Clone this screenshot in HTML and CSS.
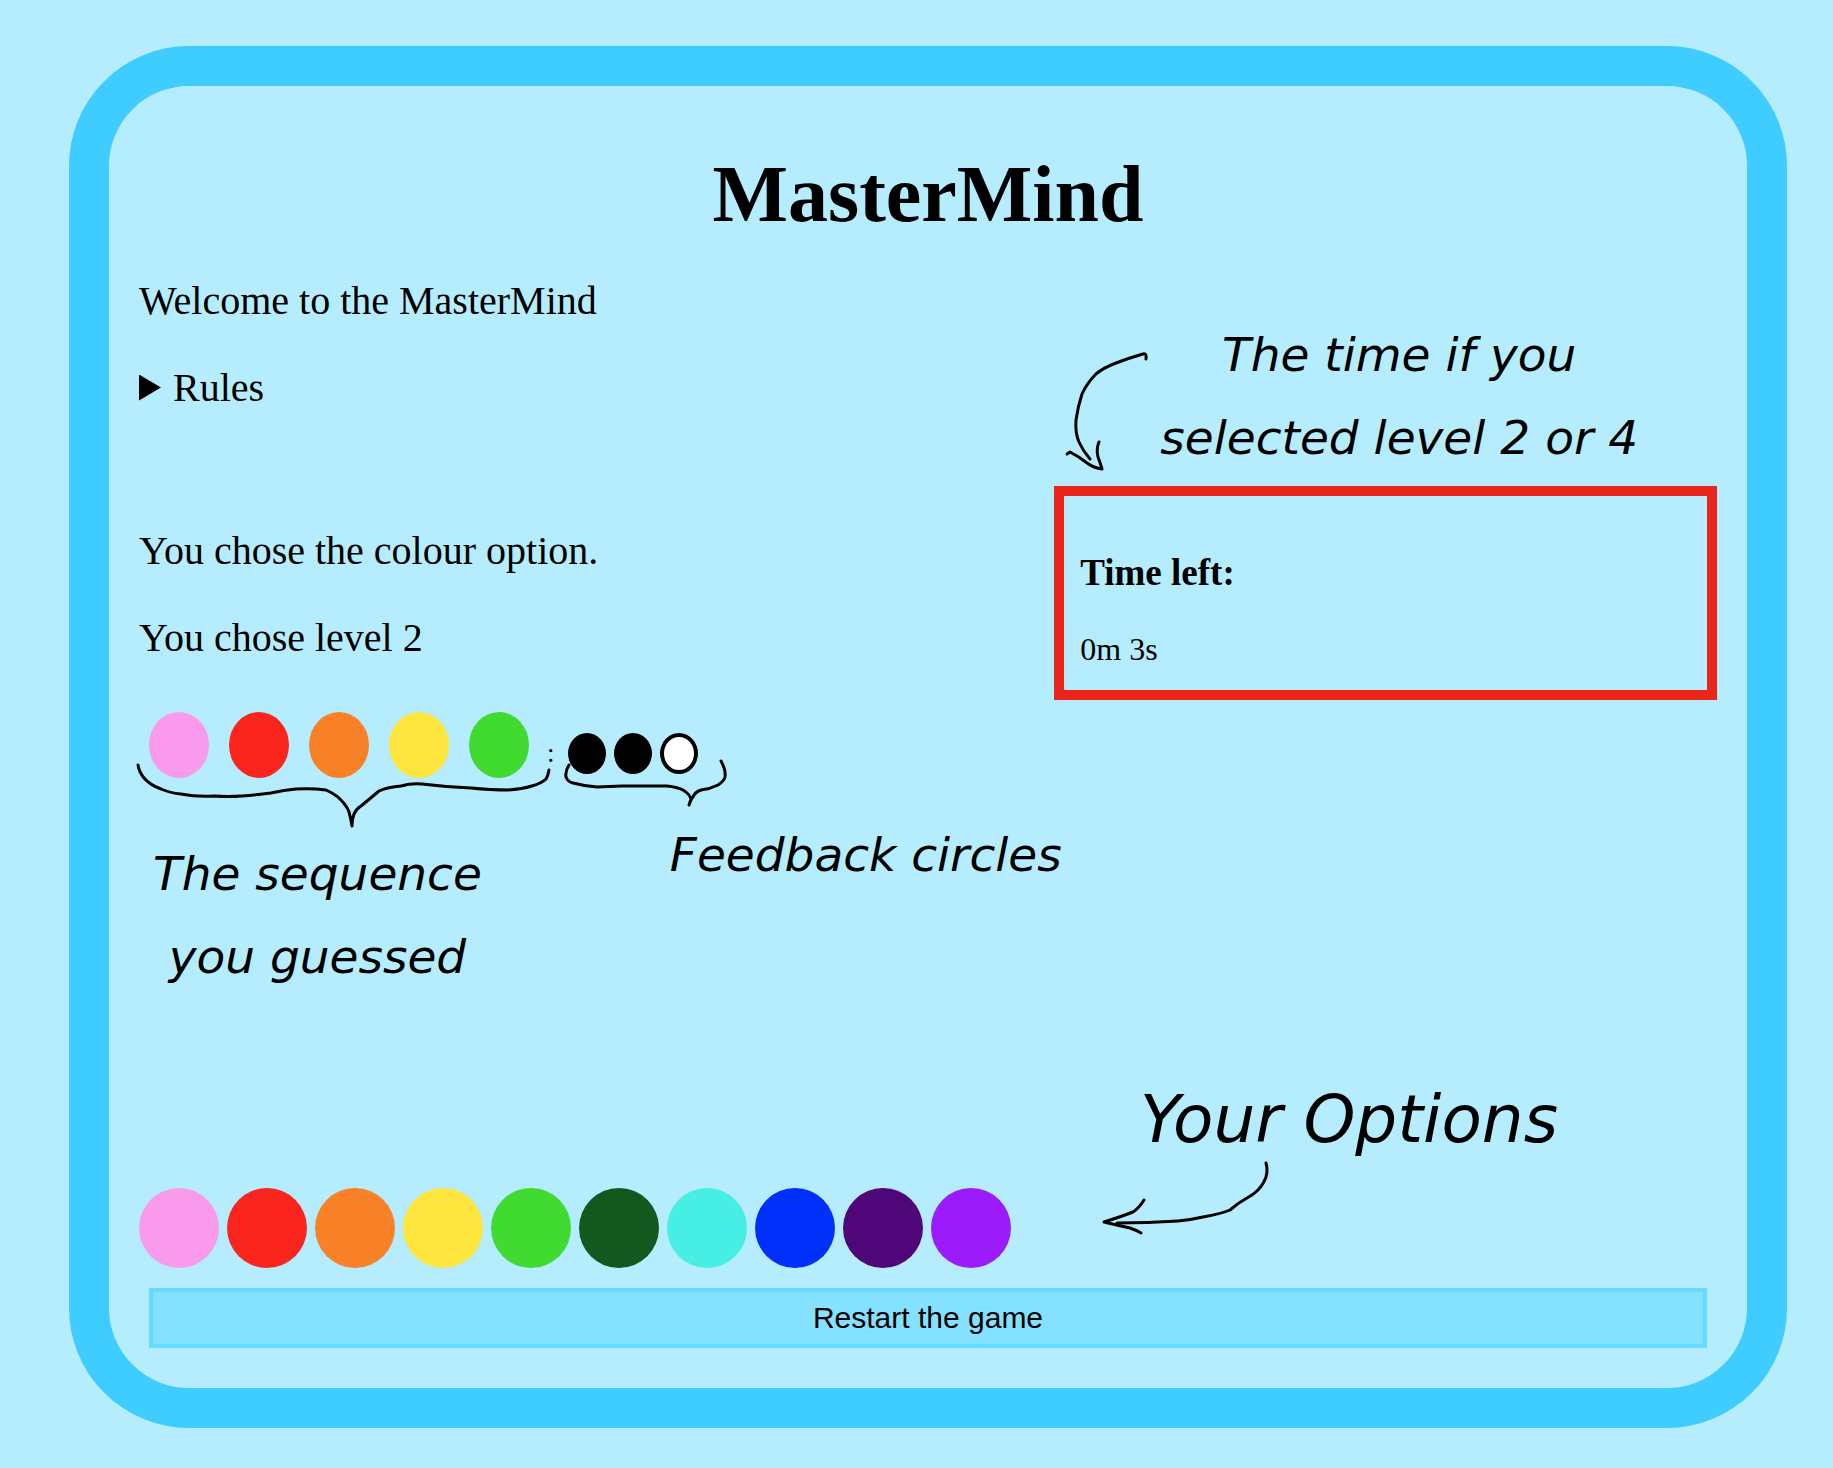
FILE: index.html
```html
<!DOCTYPE html>
<html lang="en">
<head>
<meta charset="utf-8">
<meta name="viewport" content="width=device-width, initial-scale=1">
<title>MasterMind</title>
<link rel="stylesheet" href="styles.css">
</head>
<body>
<main class="board">
  <h1 class="title">MasterMind</h1>

  <div class="top">
    <div class="intro">
      <p>Welcome to the MasterMind</p>
      <details class="rules">
        <summary>Rules</summary>
      </details>
      <p>You chose the colour option.</p>
      <p>You chose level 2</p>
    </div>

    <div class="side">
      <div class="note time-note">
        <svg class="ink" width="90" height="129" viewBox="0 0 90 129" aria-hidden="true">
          <path d="M84 9 Q85 3 81 4 Q67 8 54 13 Q41 18 34 24 Q25 33 20 44 Q16 56 14 70 Q13 83 17 92 Q21 101 28 109"/>
          <path d="M5 104 L8 102 Q16 106 25 113 Q32 118 40 119 Q38 112 36 107 Q34 99 37 92"/>
        </svg>
        <p class="note-text">The time if you<br>selected level 2 or 4</p>
      </div>
      <section class="timer">
        <h2>Time left:</h2>
        <p>0m 3s</p>
      </section>
    </div>
  </div>

  <div class="guess">
    <div class="sequence">
      <span class="peg pink"></span>
      <span class="peg red"></span>
      <span class="peg orange"></span>
      <span class="peg yellow"></span>
      <span class="peg green"></span>
      <svg class="ink brace" width="418" height="70" viewBox="0 0 418 70" aria-hidden="true">
        <path d="M2 4 Q3 11 8 17 Q14 24 25 28 Q34 32 45 33 Q60 36 78 35 Q92 36 106 35 Q121 34 135 32 Q148 29 160 28 Q176 27 190 29 Q199 33 204 38 Q211 45 213 51 Q215 58 216 65 Q216 58 218 53 Q220 48 225 45 Q236 36 243 30 Q252 26 265 25 Q275 22 286 23 Q310 26 335 27 Q355 29 372 29 Q386 28 396 25 Q406 22 410 18 Q412 15 413 9"/>
      </svg>
    </div>
    <span class="colon">:</span>
    <div class="feedback">
      <span class="pin"></span>
      <span class="pin"></span>
      <span class="pin white"></span>
      <svg class="ink brace" width="168" height="54" viewBox="0 0 168 54" aria-hidden="true">
        <path d="M7 9 Q3 15 4 21 Q6 26 11 27 Q22 30 35 31 L60 30 H105 Q115 31 121 34 Q129 39 129 44 L127 49 Q128 44 131 41 Q133 36 139 34 Q148 33 156 29 Q162 25 163 21 Q164 14 159 5"/>
      </svg>
    </div>
  </div>

  <div class="labels">
    <p class="note note-text sequence-note">The sequence<br>you guessed</p>
    <p class="note note-text feedback-note">Feedback circles</p>
  </div>

  <div class="options">
    <div class="palette">
      <button type="button" class="pink" aria-label="Pink"></button>
      <button type="button" class="red" aria-label="Red"></button>
      <button type="button" class="orange" aria-label="Orange"></button>
      <button type="button" class="yellow" aria-label="Yellow"></button>
      <button type="button" class="green" aria-label="Green"></button>
      <button type="button" class="forest" aria-label="Dark green"></button>
      <button type="button" class="turquoise" aria-label="Turquoise"></button>
      <button type="button" class="blue" aria-label="Blue"></button>
      <button type="button" class="indigo" aria-label="Indigo"></button>
      <button type="button" class="violet" aria-label="Violet"></button>
    </div>
    <div class="options-note">
      <p class="note note-large">Your Options</p>
      <svg class="ink" width="176" height="80" viewBox="0 0 176 80" aria-hidden="true">
        <path d="M168 5 Q170 12 168 19 Q165 27 160 32 Q155 37 149 40 Q140 45 132 52 Q126 55 105 59 Q92 62 80 63 Q50 65 19 65"/>
        <path d="M46 42 Q41 50 35 54 Q25 58 6 64 Q18 67 32 70 Q38 72 43 75"/>
      </svg>
    </div>
  </div>

  <button type="button" class="restart">Restart the game</button>
</main>
</body>
</html>
```

FILE: styles.css
```css
* {
  box-sizing: border-box;
}

body {
  margin: 0;
  padding: 46px 46px 40px 69px;
  background: #b5edff;
  color: #000;
  font-family: "Liberation Serif", "Times New Roman", serif;
  font-size: 40px;
  line-height: 47px;
}

h1,
h2,
p {
  margin: 0;
}

.board {
  display: flex;
  flex-direction: column;
  padding: 30px 30px 40px;
  border: 40px solid #3fcdff;
  border-radius: 120px;
}

.title {
  margin: 32px 0 37px;
  font-size: 80px;
  line-height: 92px;
  text-align: center;
}

.top {
  display: flex;
  justify-content: space-between;
}

.intro {
  display: flex;
  flex-direction: column;
  gap: 40px;
}

.rules {
  margin-bottom: 76px;
}

.rules summary {
  display: flex;
  align-items: center;
  gap: 12px;
  list-style: none;
}

.rules summary::before {
  content: "";
  width: 22px;
  height: 26px;
  background: #000;
  clip-path: polygon(0 0, 100% 50%, 0 100%);
}

.side {
  display: flex;
  flex-direction: column;
  justify-content: flex-end;
  width: 42%;
  min-height: 423px;
}

.note {
  font-family: "Segoe Print", "DejaVu Sans", sans-serif;
  font-style: italic;
}

.note-text {
  font-size: 47px;
  line-height: 83px;
  text-align: center;
  white-space: nowrap;
}

.note-large {
  font-size: 66px;
  line-height: 76px;
  padding-left: 42px;
  white-space: nowrap;
}

.ink {
  display: block;
  flex: none;
  fill: none;
  stroke: #000;
  stroke-width: 3;
  stroke-linecap: round;
  stroke-linejoin: round;
}

.time-note {
  display: flex;
  align-items: flex-end;
  gap: 8px;
  padding: 0 0 7px 8px;
}

.timer {
  padding: 53px 16px 17px;
  border: 10px solid #e9251c;
  font-size: 32px;
}

.timer h2 {
  margin-bottom: 30px;
  font-size: 37px;
}

.guess {
  display: flex;
  margin-top: 12px;
}

.sequence {
  position: relative;
  display: flex;
  gap: 20px;
  padding: 0 10px;
}

.peg {
  width: 60px;
  height: 66px;
  border-radius: 50%;
}

.brace {
  position: absolute;
}

.sequence .brace {
  left: -3px;
  top: 49px;
}

.colon {
  width: 29px;
  padding: 18px 0 0 8px;
  font-size: 27px;
}

.feedback {
  position: relative;
  display: flex;
  align-self: flex-end;
  gap: 8px;
  margin-bottom: 4px;
}

.feedback .brace {
  left: -6px;
  top: 23px;
}

.pin {
  width: 38px;
  height: 41px;
  border: 4px solid #000;
  border-radius: 50%;
  background: #000;
}

.labels {
  display: flex;
  gap: 188px;
  margin: 35px 0 80px;
  padding-left: 14px;
}

.sequence-note {
  margin-top: 19px;
}

.options {
  display: flex;
  align-items: flex-end;
  gap: 87px;
}

.palette {
  display: flex;
  gap: 8px;
}

.palette button {
  width: 80px;
  height: 80px;
  padding: 0;
  border: 0;
  border-radius: 50%;
}

.options-note {
  padding: 4px 0 30px;
}

.restart {
  height: 60px;
  margin: 20px 10px 0;
  border: 4px solid #67dbff;
  background: #84e1ff;
  color: #000;
  font-family: "Liberation Sans", Arial, sans-serif;
  font-size: 30px;
}

.pink { background: #f99aec; }
.red { background: #fa261d; }
.orange { background: #f98128; }
.yellow { background: #ffe63e; }
.green { background: #40da31; }
.forest { background: #14571f; }
.turquoise { background: #46eee4; }
.blue { background: #0030fa; }
.indigo { background: #4f0678; }
.violet { background: #9b1bfa; }
.white { background: #fff; }
```
